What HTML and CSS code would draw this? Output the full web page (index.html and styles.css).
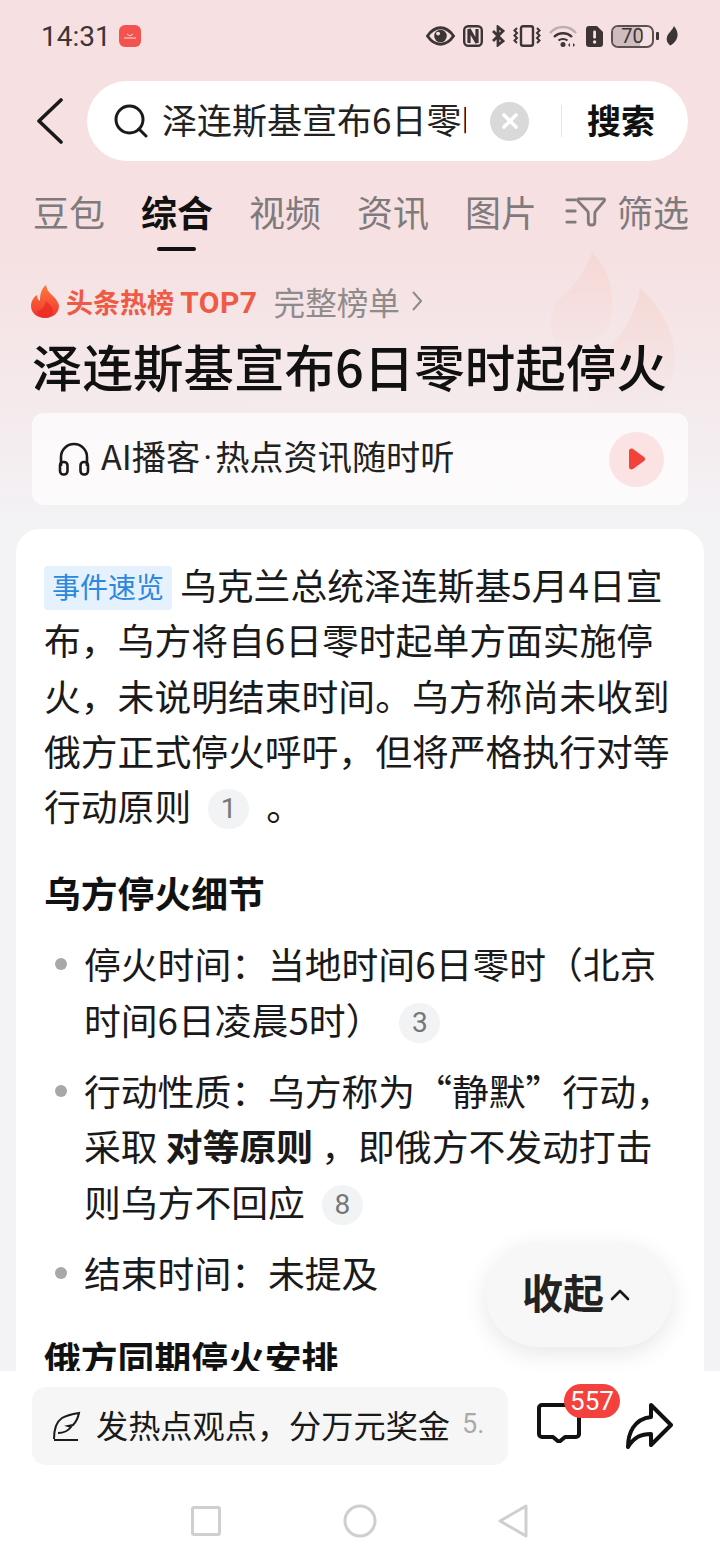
FILE: index.html
```html
<!DOCTYPE html>
<html lang="zh-CN">
<head>
  <meta charset="UTF-8">
  <meta name="viewport" content="width=device-width, initial-scale=1.0">
  <title>搜索</title>
  <link rel="stylesheet" href="styles.css">
</head>
<body>
  <div class="screen">
    <!-- background flames -->
    <svg class="bg-flames" width="150" height="160" viewBox="0 0 150 160">
      <defs><linearGradient id="fade" x1="0" y1="0" x2="0" y2="1"><stop offset="0" stop-color="#f6cfc8" stop-opacity=".5"/><stop offset="1" stop-color="#f6cfc8" stop-opacity="0"/></linearGradient></defs>
      <path d="M50 2c14 14 22 34 20 58-2 24-20 40-44 50C8 94 4 72 14 52 26 42 42 26 50 2z" fill="url(#fade)"/>
      <path d="M98 38c22 20 38 48 34 78-2 18-10 34-20 44H52c-10-14-12-30-4-48 22-14 44-38 50-74z" fill="url(#fade)"/>
    </svg>

    <div class="status-bar">
      <span class="time">14:31</span>
      <span class="app-badge"><svg width="14" height="8" viewBox="0 0 14 8"><path d="M1 6h12M4 2l3 2 3-2" stroke="#fff" stroke-width="1" fill="none" opacity=".8"/></svg></span>
      <div class="status-icons">
        <svg width="29" height="20" viewBox="0 0 30 20"><path d="M1.500 10C6 3.500 10 1.500 15 1.500S24 3.500 28.500 10C24 16.500 20 18.500 15 18.500S6 16.500 1.500 10z" fill="none" stroke="#3d3436" stroke-width="3"/><circle cx="15" cy="10" r="6.500" fill="#3d3436"/><circle cx="12.500" cy="7.500" r="2" fill="#f6e0e1"/></svg>
        <svg width="20" height="22" viewBox="0 0 20 22"><rect x="1.200" y="1.200" width="17.600" height="19.600" rx="4" fill="none" stroke="#3d3436" stroke-width="2.400"/><path d="M6 4v14M14 4v14M6 4l8 14" stroke="#3d3436" stroke-width="3.200" fill="none"/></svg>
        <svg width="14" height="22" viewBox="0 0 14 22"><path d="M2 6l10 10-5 4V2l5 4L2 16" fill="none" stroke="#3d3436" stroke-width="2.800"/></svg>
        <svg width="28" height="22" viewBox="0 0 28 22"><rect x="8" y="1.200" width="12" height="19.600" rx="2" fill="none" stroke="#3d3436" stroke-width="2.400"/><path d="M4 3l-2.500 2.500L4 8 1.500 10.500 4 13l-2.500 2.500L4 18M24 3l2.500 2.500L24 8l2.500 2.500L24 13l2.500 2.500L24 18" fill="none" stroke="#3d3436" stroke-width="2"/></svg>
        <svg width="29" height="22" viewBox="0 0 29 22"><path d="M1 8c7-8 19-8 26 0" fill="none" stroke="#bcafb1" stroke-width="2.400"/><path d="M5 12c5-5 13-5 18 0" fill="none" stroke="#3d3436" stroke-width="2.400"/><path d="M9.500 15.500c2.500-2 6.500-2 9 0" fill="none" stroke="#3d3436" stroke-width="2.200"/><circle cx="14" cy="19.500" r="2.500" fill="#3d3436"/><path d="M21 18l-2 2 2 2zM24 18l2 2-2 2z" fill="#3d3436"/></svg>
        <svg width="17" height="21" viewBox="0 0 17 21"><path d="M3 0h8l6 6v12a3 3 0 0 1-3 3H3a3 3 0 0 1-3-3V3a3 3 0 0 1 3-3z" fill="#3d3436"/><rect x="7.200" y="4.500" width="2.800" height="8" rx="1.200" fill="#f6e0e1"/><circle cx="8.600" cy="16" r="1.700" fill="#f6e0e1"/></svg>
        <div class="battery"><span class="battery-fill"></span><span class="battery-num">70</span></div>
        <svg class="battery-tip" width="3" height="8" viewBox="0 0 3 8"><rect width="3" height="8" rx="1" fill="#3d3436"/></svg>
        <svg class="leaf" width="12" height="20" viewBox="0 0 12 20"><path d="M8 0c3 4 4 7 3.500 10-.5 4-3 7-7 9.500C1.500 17.500 0 14 1 11 2 7 6 5 8 0z" fill="#3d3436"/></svg>
      </div>
    </div>

    <div class="search-row">
      <svg class="back" width="28" height="46" viewBox="0 0 28 46"><path d="M25 2L3 23l22 21" fill="none" stroke="#1a1a1a" stroke-width="3.600" stroke-linecap="round" stroke-linejoin="round"/></svg>
      <div class="search-box">
        <svg width="34" height="34" viewBox="0 0 34 34"><circle cx="15.500" cy="15.500" r="13.500" fill="none" stroke="#1a1a1a" stroke-width="3"/><path d="M25 25l7 7" stroke="#1a1a1a" stroke-width="3" stroke-linecap="round"/></svg>
        <div class="search-text">泽连斯基宣布6日零时起停火</div>
        <span class="search-clear">
          <svg width="18" height="18" viewBox="0 0 18 18"><path d="M3 3l12 12M15 3L3 15" stroke="#fff" stroke-width="3.600" stroke-linecap="round"/></svg>
        </span>
        <span class="search-divider"></span>
        <span class="search-btn">搜索</span>
      </div>
    </div>

    <div class="tabs">
      <span class="tab">豆包</span>
      <span class="tab active">综合</span>
      <span class="tab">视频</span>
      <span class="tab">资讯</span>
      <span class="tab">图片</span>
      <span class="tab filter">
        <svg width="41" height="34" viewBox="0 0 44 34"><path d="M2 5h9M2 17h9M2 29h9" stroke="#7f7a7b" stroke-width="3" stroke-linecap="round"/><path d="M15 4h26c1.500 0 2 1 1 2.500L33 17c-1 1-1 2-1 3v9c0 2-1 3-3 3h-1c-2 0-3-1-3-3v-9c0-1 0-2-1-3L14 6.500C13 5 13.500 4 15 4z" fill="none" stroke="#7f7a7b" stroke-width="3"/></svg>
        筛选
      </span>
    </div>

    <div class="hot-head">
      <svg width="28" height="33" viewBox="0 0 28 33">
        <defs><linearGradient id="flame" x1="0" y1="0" x2="0" y2="1"><stop offset="0" stop-color="#ff7a3c"/><stop offset="1" stop-color="#f0342f"/></linearGradient></defs>
        <path d="M15 0c1 6 4 8 8 12 3 3 5 7 5 9 0 7-6 12-14 12S0 28 0 21c0-5 3-9 6-11 0 3 1 5 3 6 0-6 1-12 6-16z" fill="url(#flame)"/>
        <path d="M15 16c3 3 7 6 7 10 0 4-3 7-8 7s-8-3-8-7c3 0 8-3 9-10z" fill="#e8291f" opacity=".7"/>
      </svg>
      <span class="hot-label">头条热榜 <span class="hot-top">TOP7</span></span>
      <span class="hot-more">完整榜单</span>
      <svg width="10" height="20" viewBox="0 0 10 20"><path d="M1 1l8 9-8 9" fill="none" stroke="#8f8b8c" stroke-width="2"/></svg>
    </div>

    <h1 class="headline">泽连斯基宣布6日零时起停火</h1>

    <div class="podcast">
      <svg width="32" height="34" viewBox="0 0 32 34"><path d="M3 24V15a13 13 0 0 1 26 0v9" fill="none" stroke="#1a1a1a" stroke-width="2.600"/><rect x="2" y="20" width="7.500" height="12.500" rx="3.500" fill="none" stroke="#1a1a1a" stroke-width="2.600"/><rect x="22.500" y="20" width="7.500" height="12.500" rx="3.500" fill="none" stroke="#1a1a1a" stroke-width="2.600"/></svg>
      <span class="podcast-text">AI播客<span class="dot">·</span>热点资讯随时听</span>
      <span class="play"><svg width="18" height="22" viewBox="0 0 18 22"><path d="M1 3c0-2 2-3 4-2l11 8c1.500 1 1.500 3 0 4L5 21c-2 1-4 0-4-2z" fill="#f2423a"/></svg></span>
    </div>

    <div class="card">
      <p class="summary"><span class="tag">事件速览</span>乌克兰总统泽连斯基5月4日宣布，乌方将自6日零时起单方面实施停火，未说明结束时间。乌方称尚未收到俄方正式停火呼吁，但将严格执行对等行动原则<span class="cite">1</span>。</p>
      <h2>乌方停火细节</h2>
      <ul>
        <li>停火时间：当地时间6日零时（北京时间6日凌晨5时）<span class="cite">3</span></li>
        <li>行动性质：乌方称为“静默”行动，采取 <b>对等原则</b> ，即俄方不发动打击则乌方不回应<span class="cite">8</span></li>
        <li>结束时间：未提及</li>
      </ul>
      <h2>俄方同期停火安排</h2>
    </div>

    <div class="collapse">收起<svg width="20" height="12" viewBox="0 0 20 12"><path d="M2 10l8-8 8 8" fill="none" stroke="#1a1a1a" stroke-width="2.600" stroke-linecap="round" stroke-linejoin="round"/></svg></div>

    <div class="bottom-bar">
      <div class="comment-input">
        <svg width="30" height="30" viewBox="0 0 30 30"><path d="M2 28c0-10 2-17 8-21 5-3 11-4 17-5-1 5-3 9-6 12l-5 1 3 1c-3 4-7 6-13 6" fill="none" stroke="#1a1a1a" stroke-width="2"/><path d="M2 29h24" stroke="#1a1a1a" stroke-width="2"/></svg>
        <span class="comment-text">发热点观点，分万元奖金</span>
        <span class="comment-more">5.</span>
      </div>
      <div class="comment-icon">
        <svg width="46" height="56" viewBox="0 0 46 56"><path d="M6 18h34a3 3 0 0 1 3 3v26a3 3 0 0 1-3 3H29l-6 5-6-5H6a3 3 0 0 1-3-3V21a3 3 0 0 1 3-3z" fill="none" stroke="#111" stroke-width="4" stroke-linejoin="round"/></svg>
        <span class="badge">557</span>
      </div>
      <svg class="share" width="48" height="46" viewBox="0 0 48 46"><path d="M26 2l20 20-20 20V31C16 31 9 34 3 44c0-14 6-28 23-30z" fill="none" stroke="#111" stroke-width="4" stroke-linejoin="round"/></svg>
    </div>

    <div class="nav-bar">
      <svg width="30" height="30" viewBox="0 0 30 30"><rect x="1.500" y="1.500" width="27" height="27" rx="1.500" fill="none" stroke="#cfcfcf" stroke-width="3"/></svg>
      <svg width="34" height="34" viewBox="0 0 34 34"><circle cx="17" cy="17" r="15" fill="none" stroke="#cfcfcf" stroke-width="3"/></svg>
      <svg width="30" height="34" viewBox="0 0 30 34"><path d="M28 2v30L2 17z" fill="none" stroke="#cfcfcf" stroke-width="3" stroke-linejoin="round"/></svg>
    </div>
  </div>
</body>
</html>
```

FILE: styles.css
```css
* {
  box-sizing: border-box;
}

body {
  margin: 0;
  font-family: "Noto Sans CJK SC", "Noto Sans", sans-serif;
  color: #1a1a1a;
}

.screen {
  position: relative;
  width: 720px;
  height: 1560px;
  overflow: hidden;
  display: flex;
  flex-direction: column;
  background: linear-gradient(180deg, #f6e0e1 0, #f6e0e1 240px, #f3f3f6 540px);
}

.bg-flames {
  position: absolute;
  top: 250px;
  left: 542px;
}

/* status bar */
.status-bar {
  height: 72px;
  padding: 0 42px 0 41px;
  display: flex;
  align-items: center;
  flex-shrink: 0;
  position: relative;
}

.time {
  font-family: Roboto, sans-serif;
  font-size: 28px;
  color: #3d3436;
}

.app-badge {
  width: 22px;
  height: 22px;
  margin-left: 8px;
  border-radius: 6px;
  background: #f4524f;
  display: flex;
  align-items: center;
  justify-content: center;
}

.status-icons {
  margin-left: auto;
  display: flex;
  align-items: center;
  gap: 8px;
}

.battery {
  position: relative;
  width: 43px;
  height: 23px;
  border: 2px solid #5b5052;
  border-radius: 7px;
  overflow: hidden;
  display: flex;
  align-items: center;
  justify-content: center;
}

.battery-fill {
  position: absolute;
  left: 0;
  top: 0;
  bottom: 0;
  width: 70%;
  background: #cfbcbe;
}

.battery-num {
  position: relative;
  font-family: Roboto, sans-serif;
  font-size: 20px;
  line-height: 1;
  color: #3d3436;
}

.battery-tip {
  margin-left: -6px;
}

.leaf {
  margin-left: -1px;
}

/* search */
.search-row {
  margin-top: 9px;
  height: 80px;
  padding: 0 32px 0 36px;
  display: flex;
  align-items: center;
  flex-shrink: 0;
  position: relative;
}

.back {
  flex-shrink: 0;
}

.search-box {
  margin-left: 23px;
  flex: 1;
  height: 80px;
  border-radius: 40px;
  background: #fff;
  display: flex;
  align-items: center;
  padding-left: 27px;
}

.search-box svg {
  flex-shrink: 0;
}

.search-text {
  margin-left: 14px;
  width: 304px;
  padding-bottom: 4px;
  overflow: hidden;
  white-space: nowrap;
  font-size: 35px;
  line-height: 50px;
  color: #222;
}

.search-clear {
  margin-left: 24px;
  width: 39px;
  height: 39px;
  border-radius: 50%;
  background: #d9d9d9;
  display: flex;
  align-items: center;
  justify-content: center;
}

.search-divider {
  margin-left: 32px;
  width: 1px;
  height: 32px;
  background: #e6e6e6;
}

.search-btn {
  margin-left: 25px;
  padding-bottom: 4px;
  font-size: 34px;
  font-weight: 700;
  color: #111;
}

/* tabs */
.tabs {
  height: 100px;
  padding: 0 32px 0 33px;
  display: flex;
  gap: 36px;
  align-items: flex-start;
  flex-shrink: 0;
  position: relative;
}

.tab {
  position: relative;
  flex-shrink: 0;
  margin-top: 24px;
  font-size: 36px;
  line-height: 52px;
  color: #7f7a7b;
  white-space: nowrap;
}

.tab.active {
  color: #111;
  font-weight: 700;
}

.tab.active::after {
  content: "";
  position: absolute;
  left: 16px;
  top: 62px;
  width: 39px;
  height: 4px;
  border-radius: 2px;
  background: #111;
}

.filter {
  margin-left: -8px;
  display: flex;
  align-items: center;
  gap: 11px;
}

/* hot list head */
.hot-head {
  height: 36px;
  margin-top: 22px;
  padding: 0 31px;
  display: flex;
  align-items: center;
  flex-shrink: 0;
  position: relative;
}

.hot-label {
  margin-left: 7px;
  font-size: 27px;
  font-weight: 700;
  color: #ef5a45;
}

.hot-top {
  font-family: Roboto, sans-serif;
  font-size: 30px;
  letter-spacing: .5px;
}

.hot-more {
  margin-left: 16px;
  margin-right: 12px;
  font-size: 31.600px;
  color: #8f8b8c;
}

.headline {
  margin: 15px 0 0;
  padding: 0 32px;
  font-size: 50.500px;
  line-height: 62px;
  font-weight: 500;
  color: #111;
  white-space: nowrap;
  flex-shrink: 0;
  position: relative;
}

/* podcast */
.podcast {
  margin: 17px 32px 0;
  height: 92px;
  padding: 0 24px 0 26px;
  border-radius: 12px;
  background: rgba(255, 255, 255, .7);
  display: flex;
  align-items: center;
  flex-shrink: 0;
  position: relative;
}

.podcast-text {
  margin-left: 11px;
  padding-bottom: 8px;
  font-size: 34.200px;
  color: #222;
}

.dot {
  font-family: Roboto, sans-serif;
  margin: 0 3px;
}

.play {
  margin-left: auto;
  width: 55px;
  height: 55px;
  border-radius: 50%;
  background: #fae3e2;
  display: flex;
  align-items: center;
  justify-content: center;
}

/* article card */
.card {
  margin: 24px 16px 0;
  flex: 1;
  min-height: 0;
  overflow: hidden;
  padding: 28px 30px 0 28px;
  border-radius: 24px 24px 0 0;
  background: #fff;
  font-size: 36.800px;
  line-height: 55.300px;
  color: #1a1a1a;
}

.summary {
  margin: 0;
}

.tag {
  display: inline-block;
  height: 44px;
  margin-right: 8px;
  padding: 0 8px;
  border-radius: 4px;
  background: #e5f1fc;
  color: #2c88de;
  font-size: 28px;
  line-height: 40px;
  vertical-align: 2px;
}

.cite {
  display: inline-block;
  width: 41px;
  height: 40px;
  margin: 0 17px;
  border-radius: 20px;
  background: #f2f3f5;
  color: #777;
  font-family: Roboto, sans-serif;
  font-size: 28px;
  line-height: 40px;
  text-align: center;
  vertical-align: 3px;
}

.card h2 {
  margin: 32px 0 0;
  font-size: 36.800px;
  line-height: 55px;
  font-weight: 700;
  color: #111;
}

.card ul {
  margin: 16px 0 0;
  padding: 0;
  list-style: none;
}

.card li {
  position: relative;
  padding-left: 40px;
  margin-bottom: 16px;
}

.card li::before {
  content: "";
  position: absolute;
  left: 11px;
  top: 22px;
  width: 12px;
  height: 12px;
  border-radius: 50%;
  background: #a8a8a8;
}

.card li b {
  font-weight: 700;
}

.card ul + h2 {
  margin-top: 30px;
}

/* floating button */
.collapse {
  position: absolute;
  left: 486px;
  top: 1243px;
  width: 186px;
  height: 104px;
  padding-bottom: 8px;
  padding-right: 6px;
  border-radius: 52px;
  background: #f7f7f7;
  box-shadow: 0 6px 24px rgba(0, 0, 0, .1);
  display: flex;
  align-items: center;
  justify-content: center;
  gap: 6px;
  font-size: 41px;
  font-weight: 700;
  color: #222;
}

.collapse svg {
  margin-top: 8px;
}

/* bottom bar */
.bottom-bar {
  height: 110px;
  padding: 16px 32px 16px;
  background: #fff;
  display: flex;
  align-items: flex-start;
  flex-shrink: 0;
  position: relative;
}

.comment-input {
  width: 476px;
  height: 78px;
  padding-left: 20px;
  border-radius: 14px;
  background: #f6f6f6;
  display: flex;
  align-items: center;
}

.comment-text {
  margin-left: 14px;
  padding-bottom: 4px;
  font-size: 32.200px;
  color: #1a1a1a;
}

.comment-more {
  margin-left: 12px;
  padding-bottom: 4px;
  font-family: Roboto, sans-serif;
  font-size: 27px;
  color: #aaa;
}

.comment-icon {
  position: relative;
  margin-left: 28px;
  width: 48px;
  height: 70px;
}

.badge {
  position: absolute;
  left: 28px;
  top: -3px;
  min-width: 56px;
  height: 34px;
  padding: 0 6px;
  border-radius: 17px;
  background: #f5413d;
  color: #fff;
  font-family: Roboto, sans-serif;
  font-size: 26px;
  line-height: 34px;
  text-align: center;
}

.share {
  margin-left: 41px;
  margin-top: 16px;
  flex-shrink: 0;
}

/* nav bar */
.nav-bar {
  height: 79px;
  padding: 0 192px 0 191px;
  background: #fff;
  display: flex;
  align-items: center;
  justify-content: space-between;
  flex-shrink: 0;
}
```
